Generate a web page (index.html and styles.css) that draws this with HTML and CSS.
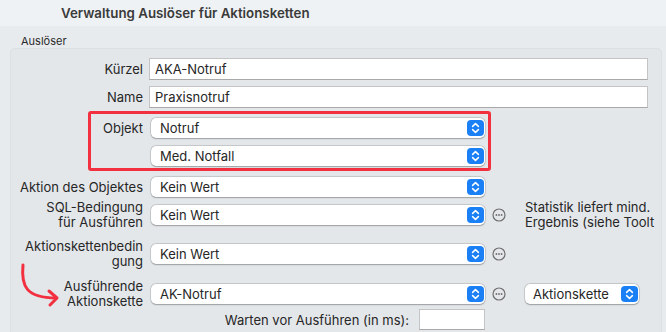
FILE: index.html
```html
<!DOCTYPE html>
<html lang="de">
<head>
<meta charset="utf-8">
<link rel="stylesheet" href="styles.css">
</head>
<body>
<div class="page">
  <header class="titlebar">Verwaltung Auslöser für Aktionsketten</header>
  <div class="content">
    <div class="group-title">Auslöser</div>
    <section class="group">
      <div class="row r-kuerzel">
        <label class="lbl">Kürzel</label>
        <div class="ctl"><div class="textfield">AKA-Notruf</div></div>
      </div>
      <div class="row r-name">
        <label class="lbl">Name</label>
        <div class="ctl"><div class="textfield">Praxisnotruf</div></div>
      </div>
      <div class="row r-objekt">
        <label class="lbl">Objekt</label>
        <div class="ctl"><div class="popup"><span>Notruf</span><svg class="stepper" viewBox="0 0 17 16"><rect width="17" height="16" rx="4" fill="#1b7ff6"/><path d="M5.6 6.4 8.5 3.6 11.4 6.4M5.6 9.6 8.5 12.4 11.4 9.6" fill="none" stroke="#fff" stroke-width="1.5" stroke-linecap="round" stroke-linejoin="round"/></svg></div></div>
      </div>
      <div class="row r-med">
        <label class="lbl"></label>
        <div class="ctl"><div class="popup"><span>Med. Notfall</span><svg class="stepper" viewBox="0 0 17 16"><rect width="17" height="16" rx="4" fill="#1b7ff6"/><path d="M5.6 6.4 8.5 3.6 11.4 6.4M5.6 9.6 8.5 12.4 11.4 9.6" fill="none" stroke="#fff" stroke-width="1.5" stroke-linecap="round" stroke-linejoin="round"/></svg></div></div>
      </div>
      <div class="row r-aktion">
        <label class="lbl">Aktion des Objektes</label>
        <div class="ctl"><div class="popup"><span>Kein Wert</span><svg class="stepper" viewBox="0 0 17 16"><rect width="17" height="16" rx="4" fill="#1b7ff6"/><path d="M5.6 6.4 8.5 3.6 11.4 6.4M5.6 9.6 8.5 12.4 11.4 9.6" fill="none" stroke="#fff" stroke-width="1.5" stroke-linecap="round" stroke-linejoin="round"/></svg></div></div>
      </div>
      <div class="row r-two r-sql">
        <label class="lbl">SQL-Bedingung<br>für Ausführen</label>
        <div class="ctl">
          <div class="popup"><span>Kein Wert</span><svg class="stepper" viewBox="0 0 17 16"><rect width="17" height="16" rx="4" fill="#1b7ff6"/><path d="M5.6 6.4 8.5 3.6 11.4 6.4M5.6 9.6 8.5 12.4 11.4 9.6" fill="none" stroke="#fff" stroke-width="1.5" stroke-linecap="round" stroke-linejoin="round"/></svg></div>
          <svg class="more" viewBox="0 0 14 14"><circle cx="7" cy="7" r="6" fill="none" stroke="#6e6e6e" stroke-width="1.2"/><circle cx="4.4" cy="7" r="0.9" fill="#6e6e6e"/><circle cx="7" cy="7" r="0.9" fill="#6e6e6e"/><circle cx="9.6" cy="7" r="0.9" fill="#6e6e6e"/></svg>
          <div class="note">Statistik liefert mind.<br>Ergebnis (siehe Toolt</div>
        </div>
      </div>
      <div class="row r-two r-akb">
        <label class="lbl">Aktionskettenbedin<br>gung</label>
        <div class="ctl">
          <div class="popup"><span>Kein Wert</span><svg class="stepper" viewBox="0 0 17 16"><rect width="17" height="16" rx="4" fill="#1b7ff6"/><path d="M5.6 6.4 8.5 3.6 11.4 6.4M5.6 9.6 8.5 12.4 11.4 9.6" fill="none" stroke="#fff" stroke-width="1.5" stroke-linecap="round" stroke-linejoin="round"/></svg></div>
          <svg class="more" viewBox="0 0 14 14"><circle cx="7" cy="7" r="6" fill="none" stroke="#6e6e6e" stroke-width="1.2"/><circle cx="4.4" cy="7" r="0.9" fill="#6e6e6e"/><circle cx="7" cy="7" r="0.9" fill="#6e6e6e"/><circle cx="9.6" cy="7" r="0.9" fill="#6e6e6e"/></svg>
        </div>
      </div>
      <div class="row r-two r-aus">
        <label class="lbl">Ausführende<br>Aktionskette</label>
        <div class="ctl">
          <div class="popup"><span>AK-Notruf</span><svg class="stepper" viewBox="0 0 17 16"><rect width="17" height="16" rx="4" fill="#1b7ff6"/><path d="M5.6 6.4 8.5 3.6 11.4 6.4M5.6 9.6 8.5 12.4 11.4 9.6" fill="none" stroke="#fff" stroke-width="1.5" stroke-linecap="round" stroke-linejoin="round"/></svg></div>
          <svg class="more" viewBox="0 0 14 14"><circle cx="7" cy="7" r="6" fill="none" stroke="#6e6e6e" stroke-width="1.2"/><circle cx="4.4" cy="7" r="0.9" fill="#6e6e6e"/><circle cx="7" cy="7" r="0.9" fill="#6e6e6e"/><circle cx="9.6" cy="7" r="0.9" fill="#6e6e6e"/></svg>
          <div class="popup small"><span>Aktionskette</span><svg class="stepper" viewBox="0 0 17 16"><rect width="17" height="16" rx="4" fill="#1b7ff6"/><path d="M5.6 6.4 8.5 3.6 11.4 6.4M5.6 9.6 8.5 12.4 11.4 9.6" fill="none" stroke="#fff" stroke-width="1.5" stroke-linecap="round" stroke-linejoin="round"/></svg></div>
        </div>
      </div>
      <div class="row r-warten">
        <label class="lbl"></label>
        <div class="ctl">
          <div class="wait">
            <span>Warten vor Ausführen (in ms):</span>
            <div class="textfield tiny"></div>
          </div>
        </div>
      </div>
    </section>
  </div>
  <div class="highlight"></div>
  <svg class="arrow" viewBox="0 0 80 60" width="80" height="60"><path d="M23 5 C21 26 26 38 56 38" fill="none" stroke="#f2303f" stroke-width="3" stroke-linecap="round"/><path d="M49 31 L57 38 L50 45" fill="none" stroke="#f2303f" stroke-width="3" stroke-linecap="round" stroke-linejoin="round"/></svg>
</div>
</body>
</html>
```
FILE: styles.css
```css
html, body {
  margin: 0;
  padding: 0;
  background: #e8ebee;
}
.page {
  position: relative;
  width: 666px;
  height: 332px;
  overflow: hidden;
  font-family: Inter, "Liberation Sans", sans-serif;
  font-size: 13px;
  color: #262626;
}
.titlebar {
  height: 26px;
  box-sizing: border-box;
  padding: 5px 0 0 61px;
  background: #eff2f5;
  font-weight: 600;
  font-size: 13.3px;
  color: #3a3a3a;
}
.content {
  padding: 0 4px 0 10px;
}
.group-title {
  font-size: 11px;
  padding: 9px 0 0 11px;
  height: 13px;
  line-height: 13px;
  color: #2a2a2a;
}
.group {
  margin-top: 0;
  height: 300px;
  box-sizing: border-box;
  padding-top: 9px;
  background: #e4e7ea;
  border: 1px solid #dde0e3;
  border-radius: 5px;
}
.row {
  display: flex;
  align-items: center;
}
.lbl {
  width: 132px;
  flex: none;
  text-align: right;
  line-height: 15px;
}
.ctl {
  margin-left: 6px;
  display: flex;
  align-items: center;
  flex: 1;
}
.textfield {
  box-sizing: border-box;
  width: 499px;
  height: 22px;
  background: #fff;
  border: 1px solid #c4c4c4;
  border-bottom-color: #a9a9a9;
  padding: 0 5px;
  line-height: 20px;
}
.textfield.tiny {
  width: 66px;
  height: 21px;
  margin-left: 10px;
}
.r-kuerzel { height: 22px; }
.r-name { height: 22px; margin-top: 6px; }
.r-objekt { height: 20px; margin-top: 10px; }
.r-med { height: 20px; margin-top: 8px; }
.r-aktion { height: 20px; margin-top: 11px; }
.r-two { height: 30px; }
.r-sql { margin-top: 3px; }
.r-akb { margin-top: 9px; }
.r-aus { margin-top: 10px; }
.r-warten { height: 21px; margin-top: 0; }
.popup {
  box-sizing: border-box;
  margin-left: 2px;
  width: 334px;
  height: 20px;
  background: #fff;
  border-radius: 5px;
  box-shadow: 0 0 0 0.5px rgba(0,0,0,0.18), 0 0.5px 1.5px rgba(0,0,0,0.25);
  display: flex;
  align-items: center;
  justify-content: space-between;
  padding: 0 1px 0 9px;
}
.popup.small {
  width: 114px;
  margin-left: 19px;
  padding-left: 8px;
}
.stepper {
  width: 17px;
  height: 16px;
  display: block;
}
.more {
  width: 14px;
  height: 14px;
  margin-left: 7px;
  display: block;
}
.note {
  margin-left: 19px;
  white-space: nowrap;
  line-height: 15px;
}
.wait {
  width: 336px;
  display: flex;
  justify-content: flex-end;
  align-items: center;
}
.highlight {
  position: absolute;
  left: 88px;
  top: 111px;
  width: 403px;
  height: 60px;
  box-sizing: border-box;
  border: 3px solid #f2303f;
  border-radius: 3px;
}
.arrow {
  position: absolute;
  left: 0;
  top: 260px;
}
```
